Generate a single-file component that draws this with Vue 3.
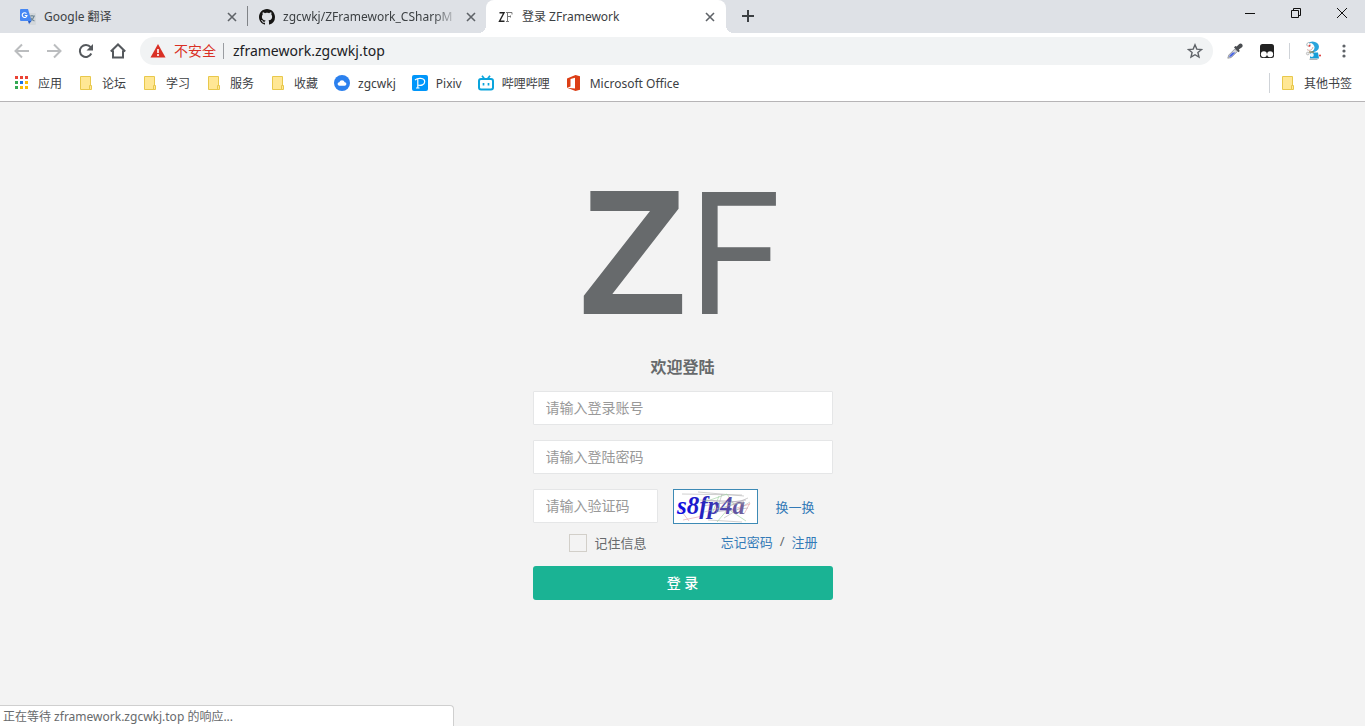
<script setup>
import { ref } from 'vue'

const folders = ['论坛', '学习', '服务', '收藏']
const account = ref('')
const password = ref('')
const code = ref('')
const remember = ref(false)
</script>

<template>
  <div class="window">
    <header class="chrome">
      <div class="tabstrip">
        <div class="tab">
          <svg class="fav" viewBox="0 0 16 16">
            <path d="M6 4h9a1 1 0 0 1 1 1v10a1 1 0 0 1-1 1H9z" fill="#d3d7db" />
            <path d="M9 7h6M12 6v1M14 7c-.5 2.500-2 4-4 5M10.500 8.500c1 2 2.500 3 4 3.500" stroke="#6f8796" stroke-width="1.200" fill="none" />
            <path d="M1 0h7l3.500 12H1a1 1 0 0 1-1-1V1a1 1 0 0 1 1-1z" fill="#4687f4" />
            <path d="M8 12h3.500L9 15z" fill="#2459c4" />
            <path d="M6.500 4.600A2.400 2.400 0 1 0 7 6.500H4.800" stroke="#fff" stroke-width="1.100" fill="none" />
          </svg>
          <span class="tab-title">Google 翻译</span>
          <button class="tab-close" aria-label="关闭标签页"><svg viewBox="0 0 10 10"><path d="M1 1l8 8M9 1l-8 8" /></svg></button>
        </div>
        <div class="tab divided">
          <svg class="fav" viewBox="0 0 16 16">
            <path fill="#161514" fill-rule="evenodd" d="M8 0C3.580 0 0 3.580 0 8c0 3.540 2.290 6.530 5.470 7.590.4.070.550-.170.550-.380 0-.190-.010-.820-.010-1.490-2.010.370-2.530-.490-2.690-.940-.090-.230-.480-.940-.820-1.130-.280-.150-.680-.520-.010-.530.630-.010 1.080.580 1.230.820.720 1.210 1.870.870 2.330.660.070-.520.280-.870.510-1.070-1.780-.200-3.640-.890-3.640-3.950 0-.870.310-1.590.820-2.150-.080-.200-.360-1.020.080-2.120 0 0 .670-.210 2.200.820.640-.180 1.320-.270 2-.270s1.360.090 2 .270c1.530-1.040 2.200-.820 2.200-.820.440 1.100.160 1.920.080 2.120.510.560.820 1.270.820 2.150 0 3.070-1.870 3.750-3.650 3.950.290.250.540.730.540 1.480 0 1.070-.010 1.930-.010 2.200 0 .210.150.460.550.380A8.010 8.010 0 0 0 16 8c0-4.420-3.580-8-8-8z" />
          </svg>
          <span class="tab-title fade">zgcwkj/ZFramework_CSharpM</span>
          <button class="tab-close" aria-label="关闭标签页"><svg viewBox="0 0 10 10"><path d="M1 1l8 8M9 1l-8 8" /></svg></button>
        </div>
        <div class="tab active">
          <svg class="fav" viewBox="0 0 16 16">
            <path d="M1.500 3.700h4.500L1.500 12.300h5" fill="none" stroke="#222" stroke-width="1.400" />
            <path d="M8 3.500h6v2M9.500 3.500v9M8 12.500h3M10 7.500h2.500M12.500 6.500v2" fill="none" stroke="#777" stroke-width="1" />
          </svg>
          <span class="tab-title">登录 ZFramework</span>
          <button class="tab-close" aria-label="关闭标签页"><svg viewBox="0 0 10 10"><path d="M1 1l8 8M9 1l-8 8" /></svg></button>
        </div>
        <button class="new-tab" aria-label="新标签页"><svg viewBox="0 0 12 12"><path d="M6 0v12M0 6h12" /></svg></button>
        <div class="win-controls">
          <button aria-label="最小化"><svg viewBox="0 0 12 12"><path d="M1 6.500h10" /></svg></button>
          <button aria-label="还原"><svg viewBox="0 0 12 12"><path d="M1.500 3.500h7v7h-7zM3.500 3.500v-2h7v7h-2" /></svg></button>
          <button aria-label="关闭"><svg viewBox="0 0 12 12"><path d="M1 1l10 10M11 1L1 11" /></svg></button>
        </div>
      </div>

      <div class="toolbar">
        <button class="tool off" aria-label="后退"><svg viewBox="0 0 16 16"><path d="M15 8H2M8 1.500L1.500 8 8 14.500" /></svg></button>
        <button class="tool off" aria-label="前进"><svg viewBox="0 0 16 16"><path d="M1 8h13M8 1.500L14.500 8 8 14.500" /></svg></button>
        <button class="tool" aria-label="重新加载"><svg viewBox="0 0 16 16"><path d="M13.300 10.500A6 6 0 1 1 12.600 4.200L14 5.600" /><path class="solid" d="M15 1v6.500H8.500z" /></svg></button>
        <button class="tool" aria-label="主页"><svg viewBox="0 0 16 16"><path d="M0.800 8.500L8 1.500l7.200 7M3 7.500v7h10v-7" /></svg></button>
        <div class="omnibox">
          <svg class="warn" viewBox="0 0 16 16">
            <path d="M8 1l7.500 13.500H.5z" fill="#d93025" />
            <path d="M8 6v4M8 11v2" stroke="#fff" stroke-width="1.600" />
          </svg>
          <span class="insecure">不安全</span>
          <span class="rule"></span>
          <input class="url" aria-label="地址" value="zframework.zgcwkj.top" />
          <button class="star" aria-label="收藏"><svg viewBox="0 0 16 16"><path d="M8 1.800l1.800 4.300 4.700.4-3.600 3 1.100 4.600L8 11.700l-4 2.400 1.100-4.600-3.600-3 4.700-.4z" /></svg></button>
        </div>
        <div class="extensions">
          <button aria-label="取色器">
            <svg viewBox="0 0 16 16">
              <path d="M.8 15.200l1-3.200 6-6 2.500 2.500-6 6z" fill="#d4d6da" stroke="#888b93" stroke-width=".8" />
              <path d="M2 14l1-2 2.500-2.500h3L4.500 13.500z" fill="#4a66e4" />
              <path d="M7 4.500l4.500 4.700 1.300-1.300-1-1.300L15 4.200c1-1 .8-2.200.1-3s-2.200-.9-3.100 0L9.700 3.600l-1.400-.5z" fill="#4a4d51" />
            </svg>
          </button>
          <button aria-label="脚本管理器">
            <svg viewBox="0 0 16 16">
              <rect x="1" y="1" width="14" height="14" rx="2.500" fill="#222" />
              <circle cx="4.900" cy="11.300" r="3" fill="#fff" /><circle cx="11.100" cy="11.300" r="3" fill="#fff" />
            </svg>
          </button>
          <span class="rule"></span>
          <button class="avatar" aria-label="用户">
            <svg viewBox="0 0 18 20">
              <ellipse cx="8.500" cy="5.800" rx="6.500" ry="5.400" fill="#2aa5dc" />
              <ellipse cx="6" cy="6.500" rx="4.500" ry="4.400" fill="#fff" />
              <ellipse cx="4.500" cy="3.500" rx="1.600" ry="2" fill="#fff" stroke="#888" stroke-width=".5" />
              <circle cx="5.500" cy="4.800" r="1" fill="#d33" />
              <path d="M3 8.500c2 1.500 5 1 6-2.500" stroke="#b98a7c" fill="none" stroke-width=".7" />
              <path d="M6 11.500h8l1 6H6z" fill="#159ed8" />
              <path d="M5 11h5" stroke="#8d7a45" stroke-width="1.200" />
              <ellipse cx="7.800" cy="14" rx="2" ry="1.900" fill="#eef6fa" />
              <circle cx="3.800" cy="12.500" r="1.400" fill="#eee" stroke="#777" stroke-width=".4" />
              <circle cx="16" cy="14.500" r="1" fill="#d33" />
              <path d="M5.500 18.300h8" stroke="#aeb6ba" stroke-width="1.400" />
            </svg>
          </button>
          <button class="more" aria-label="更多">
            <svg viewBox="0 0 16 16"><circle cx="8" cy="3" r="1.600" /><circle cx="8" cy="8" r="1.600" /><circle cx="8" cy="13" r="1.600" /></svg>
          </button>
        </div>
      </div>

      <nav class="bookmarks">
        <a href="#">
          <svg viewBox="0 0 16 16">
            <path d="M1 1h3v3H1zM6 1h3v3H6zM11 1h3v3h-3z" fill="#ea4335" />
            <path d="M1 6h3v3H1z" fill="#34a853" /><path d="M6 6h3v3H6z" fill="#1a73e8" /><path d="M11 6h3v3h-3z" fill="#fbbc05" />
            <path d="M1 11h3v3H1z" fill="#34a853" /><path d="M6 11h3v3H6zM11 11h3v3h-3z" fill="#fbbc05" />
          </svg><span>应用</span>
        </a>
        <a v-for="name in folders" :key="name" href="#">
          <svg viewBox="0 0 16 16"><path d="M2.500 1.500h10v13h-10z" fill="#ffe794" stroke="#e8c84c" /><path d="M11.500 10.500h2v4h-2z" fill="#ffe794" stroke="#e8c84c" /></svg><span>{{ name }}</span>
        </a>
        <a href="#">
          <svg viewBox="0 0 16 16"><circle cx="8" cy="8" r="8" fill="#2b80ee" /><path d="M5.500 10.800a1.800 1.800 0 0 1-.2-3.600 2.800 2.800 0 0 1 5.400 0 1.800 1.800 0 0 1-.2 3.600z" fill="#fff" /></svg><span>zgcwkj</span>
        </a>
        <a href="#">
          <svg viewBox="0 0 16 16"><rect width="16" height="16" rx="2" fill="#0096fa" /><path d="M3 5C5.500 2.800 12.700 2.500 12.700 6.800c0 3-3.700 4-6.700 3.200M5.800 4v9M4 13h3.500" fill="none" stroke="#fff" stroke-width="1.200" /></svg><span>Pixiv</span>
        </a>
        <a href="#">
          <svg viewBox="0 0 16 16"><rect x="1" y="4" width="14" height="10.500" rx="2" fill="none" stroke="#0aa4dc" stroke-width="2" /><path d="M4 .8l2.200 2.700M12 .8L9.800 3.500M5.500 8v2.500M10.500 8v2.500" stroke="#0aa4dc" stroke-width="1.700" /></svg><span>哔哩哔哩</span>
        </a>
        <a href="#">
          <svg viewBox="0 0 16 16"><path d="M1 3.500L9.500 0 14 1.300v13.400L9.500 16 1 12.800l8 .7V2.700L4.500 4v7.500L1 12.800z" fill="#dc3e15" /></svg><span>Microsoft Office</span>
        </a>
        <div class="other">
          <a href="#">
            <svg viewBox="0 0 16 16"><path d="M2.500 1.500h10v13h-10z" fill="#ffe794" stroke="#e8c84c" /><path d="M11.500 10.500h2v4h-2z" fill="#ffe794" stroke="#e8c84c" /></svg><span>其他书签</span>
          </a>
        </div>
      </nav>
    </header>

    <main class="page">
      <form class="login" @submit.prevent>
        <h1 class="logo"><b>Z</b>F</h1>
        <h3 class="welcome">欢迎登陆</h3>
        <input v-model="account" class="field" type="text" aria-label="登录账号" placeholder="请输入登录账号" />
        <input v-model="password" class="field" type="password" aria-label="登陆密码" placeholder="请输入登陆密码" />
        <div class="verify">
          <input v-model="code" class="field" type="text" aria-label="验证码" placeholder="请输入验证码" />
          <svg class="captcha" viewBox="0 0 83 33" role="img" aria-label="验证码图片">
            <defs>
              <linearGradient id="ink"><stop offset="0" stop-color="#0b08e8" /><stop offset=".45" stop-color="#2b28b8" /><stop offset="1" stop-color="#75659b" /></linearGradient>
            </defs>
            <g fill="none" stroke-width=".7">
              <path d="M8 4l60 1M24 2l46 4M36 24l38-16M50 28l26-16M34 30l34 2" stroke="#bbb" />
              <path d="M28 13l25-9 8 12M45 6l-7 18M43 32l11-13 18 12" stroke="#a6d5a8" />
              <path d="M5 18l10 13M9 30l20-4M56 20l20-6M70 24l6-11" stroke="#e7aab2" />
              <path d="M30 10l40 2M28 16l44-6M40 22l34-4" stroke="#b4aebd" />
            </g>
            <text x="3" y="24" fill="url(#ink)">s8fp4a</text>
            <path d="M26 10l44 4M30 22l40-10M48 4l-6 20" fill="none" stroke="#aaa" stroke-width=".5" />
          </svg>
          <a class="swap" href="#">换一换</a>
        </div>
        <div class="options">
          <label class="remember"><input v-model="remember" type="checkbox" /><span>记住信息</span></label>
          <div class="links"><a href="#">忘记密码</a><span>/</span><a href="#">注册</a></div>
        </div>
        <button class="submit" type="submit">登 录</button>
      </form>
    </main>

    <div class="status">正在等待 zframework.zgcwkj.top 的响应...</div>
  </div>
</template>

<style>
body {
  margin: 0;
}
</style>

<style scoped>
.window {
  position: relative;
  display: flex;
  flex-direction: column;
  min-height: 100vh;
  overflow: hidden;
  background: #f3f3f3;
  color: #676a6c;
  font-family: "Noto Sans", "Noto Sans CJK SC", sans-serif;
  font-size: 13px;
}
*, *::before, *::after {
  box-sizing: border-box;
}
button {
  padding: 0;
  border: 0;
  background: none;
  font-family: inherit;
}
a {
  color: #337ab7;
  text-decoration: none;
}
svg {
  display: block;
  flex: none;
}
.chrome {
  background: #fff;
  border-bottom: 1px solid #b6b4b6;
  color: #3c4043;
  font-size: 12px;
}
.tabstrip {
  display: flex;
  height: 33px;
  padding-left: 8px;
  background: #dee1e6;
}
.tab {
  position: relative;
  display: flex;
  align-items: center;
  gap: 8px;
  width: 239px;
  padding: 0 10px 0 12px;
}
.tab.divided::before {
  content: "";
  position: absolute;
  left: 0;
  top: 6px;
  width: 1px;
  height: 20px;
  background: #808387;
}
.tab.active {
  width: 240px;
  padding-right: 11px;
  background: #fff;
  border-radius: 8px 8px 0 0;
}
.tab.active::before,
.tab.active::after {
  content: "";
  position: absolute;
  bottom: 0;
  width: 8px;
  height: 8px;
}
.tab.active::before {
  right: 100%;
  background: radial-gradient(circle at 0 0, transparent 8px, #fff 8px);
}
.tab.active::after {
  left: 100%;
  background: radial-gradient(circle at 100% 0, transparent 8px, #fff 8px);
}
.fav {
  width: 16px;
  height: 16px;
}
.tab-title {
  flex: 1;
  white-space: nowrap;
  line-height: 18px;
}
.tab-title.fade {
  mask-image: linear-gradient(to right, #000 150px, transparent 176px);
}
.tab-close {
  display: grid;
  place-items: center;
  width: 10px;
  height: 16px;
}
.tab-close svg {
  width: 10px;
  height: 10px;
  stroke: #5f6368;
  stroke-width: 1.6;
}
.new-tab {
  display: grid;
  place-items: center;
  width: 28px;
  margin-left: 8px;
  padding-bottom: 1px;
}
.new-tab svg {
  width: 12px;
  height: 12px;
  stroke: #3c4043;
  stroke-width: 2;
}
.win-controls {
  display: flex;
  height: 26px;
  margin-left: auto;
}
.win-controls button {
  display: grid;
  place-items: center;
  width: 46px;
}
.win-controls svg {
  width: 12px;
  height: 12px;
  fill: none;
  stroke: #111;
}
.toolbar {
  display: flex;
  align-items: center;
  height: 36px;
  padding-left: 6px;
}
.tool {
  display: grid;
  place-items: center;
  width: 32px;
  height: 28px;
}
.tool svg {
  width: 16px;
  height: 16px;
  fill: none;
  stroke: #55595d;
  stroke-width: 2;
}
.tool .solid {
  fill: #55595d;
  stroke: none;
}
.tool.off svg {
  stroke: #bbbdbf;
}
.omnibox {
  display: flex;
  flex: 1;
  align-items: center;
  height: 28px;
  margin-left: 6px;
  padding: 0 10px;
  border-radius: 14px;
  background: #f1f3f4;
  font-size: 14px;
}
.warn {
  width: 16px;
  height: 16px;
}
.insecure {
  margin-left: 8px;
  color: #d93025;
  line-height: 20px;
}
.rule {
  width: 1px;
  height: 16px;
  margin: 0 9px 0 7px;
  background: #9a9da1;
}
.url {
  flex: 1;
  min-width: 0;
  padding: 0;
  border: 0;
  outline: 0;
  background: none;
  color: #202124;
  font-family: inherit;
  font-size: 14px;
  line-height: 20px;
}
.star svg {
  width: 16px;
  height: 16px;
  fill: none;
  stroke: #5f6368;
  stroke-width: 1.4;
}
.extensions {
  display: flex;
  align-items: center;
  padding: 0 13px 0 14px;
}
.extensions svg {
  width: 16px;
  height: 16px;
}
.extensions button + button {
  margin-left: 16px;
}
.extensions .rule {
  margin: 0 14px;
  background: #cfd3d8;
}
.extensions .avatar svg {
  width: 18px;
  height: 20px;
}
.extensions .more {
  margin-left: 14px;
}
.more svg {
  fill: #5f6368;
}
.bookmarks {
  display: flex;
  align-items: center;
  gap: 16px;
  height: 32px;
  padding: 0 13px 4px 14px;
}
.bookmarks a {
  display: flex;
  align-items: center;
  gap: 8px;
  color: #3c4043;
  line-height: 18px;
  white-space: nowrap;
}
.bookmarks span {
  padding-top: 2px;
}
.bookmarks svg {
  width: 16px;
  height: 16px;
}
.other {
  margin-left: auto;
  padding-left: 10px;
  border-left: 1px solid #cfd3d8;
}
.page {
  flex: 1;
}
.login {
  width: 300px;
  margin: 0 auto;
  padding-top: 50px;
}
.logo {
  height: 203px;
  margin: 0;
  font-family: Inter, sans-serif;
  font-size: 168px;
  font-weight: 400;
  line-height: 202px;
  text-align: center;
  white-space: nowrap;
}
.logo b {
  font-family: "Liberation Sans", sans-serif;
  font-size: 178px;
}
.welcome {
  margin: 0 0 12px;
  font-size: 16px;
  font-weight: 600;
  line-height: 24px;
  text-align: center;
}
.field {
  display: block;
  width: 100%;
  height: 34px;
  margin: 0 0 15px;
  padding: 5px 12px 7px;
  border: 1px solid #e5e6e7;
  border-radius: 1px;
  outline: 0;
  background: #fff;
  color: #555;
  font-family: inherit;
  font-size: 14px;
}
.field::placeholder {
  color: #999;
  opacity: 1;
}
.verify {
  display: flex;
  align-items: flex-start;
}
.verify .field {
  width: 125px;
  margin: 0 15px 0 0;
}
.captcha {
  width: 85px;
  height: 35px;
  border: 1px solid #3d8ab5;
  background: #fff;
}
.captcha text {
  font-family: "Liberation Serif", serif;
  font-size: 25px;
  font-style: italic;
  font-weight: 700;
}
.swap {
  margin-left: 18px;
  line-height: 36px;
}
.options {
  display: flex;
  align-items: center;
  justify-content: space-between;
  height: 36px;
  margin-bottom: 5px;
  padding: 0 15px 0 36px;
}
.remember {
  display: flex;
  align-items: center;
  gap: 8px;
}
.remember span {
  padding-bottom: 2px;
}
.remember input {
  appearance: none;
  width: 18px;
  height: 18px;
  margin: 0;
  border: 1px solid #d2cfc9;
}
.links {
  display: flex;
  gap: 7px;
  padding-bottom: 4px;
}
.submit {
  display: block;
  width: 100%;
  height: 34px;
  padding-bottom: 2px;
  border-radius: 3px;
  background: #1ab394;
  color: #fff;
  font-size: 14px;
  font-weight: 500;
}
.status {
  position: absolute;
  left: 0;
  bottom: 0;
  width: 454px;
  height: 21px;
  padding-left: 3px;
  border: 1px solid #cfcfcf;
  border-width: 1px 1px 0 0;
  border-radius: 0 4px 0 0;
  background: #fff;
  font-size: 12px;
  line-height: 21px;
}
</style>
